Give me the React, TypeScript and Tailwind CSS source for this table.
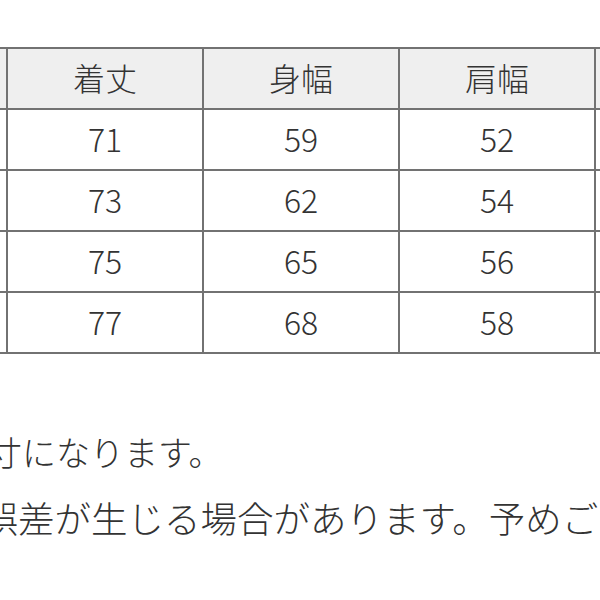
import React from 'react';

const HEADERS = ['サイズ', '着丈', '身幅', '肩幅', '袖丈'];

const ROWS = [
  ['S', '71', '59', '52', '20'],
  ['M', '73', '62', '54', '21'],
  ['L', '75', '65', '56', '22'],
  ['XL', '77', '68', '58', '23'],
];

const font = { fontFamily: '"Noto Sans CJK JP", "Noto Sans", sans-serif' };

export default function App() {
  return (
    <div className="w-[600px] h-[600px] overflow-hidden bg-white text-[#333]" style={font}>
      {/* ── Size table (cropped on both sides) ───────────────────────── */}
      <div className="ml-[-190px] mt-[47px] w-max bg-[#727272] p-[2px]">
        <div className="grid grid-cols-[194px_194px_194px_194px_194px] gap-[2px]">
          {HEADERS.map((h) => (
            <div
              key={h}
              className="h-[59px] pb-[3px] bg-[#efefef] flex items-center justify-center text-[32px] font-light leading-none"
            >
              {h}
            </div>
          ))}
          {ROWS.map((row) =>
            row.map((cell, i) => (
              <div
                key={row[0] + i}
                className="h-[59px] pb-[3px] bg-white flex items-center justify-center text-[32px] font-light leading-none"
              >
                {cell}
              </div>
            ))
          )}
        </div>
      </div>

      {/* ── Notes ────────────────────────────────────────────────────── */}
      <div className="mt-[65px] flex flex-col font-light">
        <div className="ml-[-148px] whitespace-nowrap text-[34px] leading-[66px]">平置き実寸になります。</div>
        <div className="ml-[-128px] whitespace-nowrap text-[36.5px] leading-[66px]">
          多少の誤差が生じる場合があります。予めご了承ください。
        </div>
      </div>
    </div>
  );
}
